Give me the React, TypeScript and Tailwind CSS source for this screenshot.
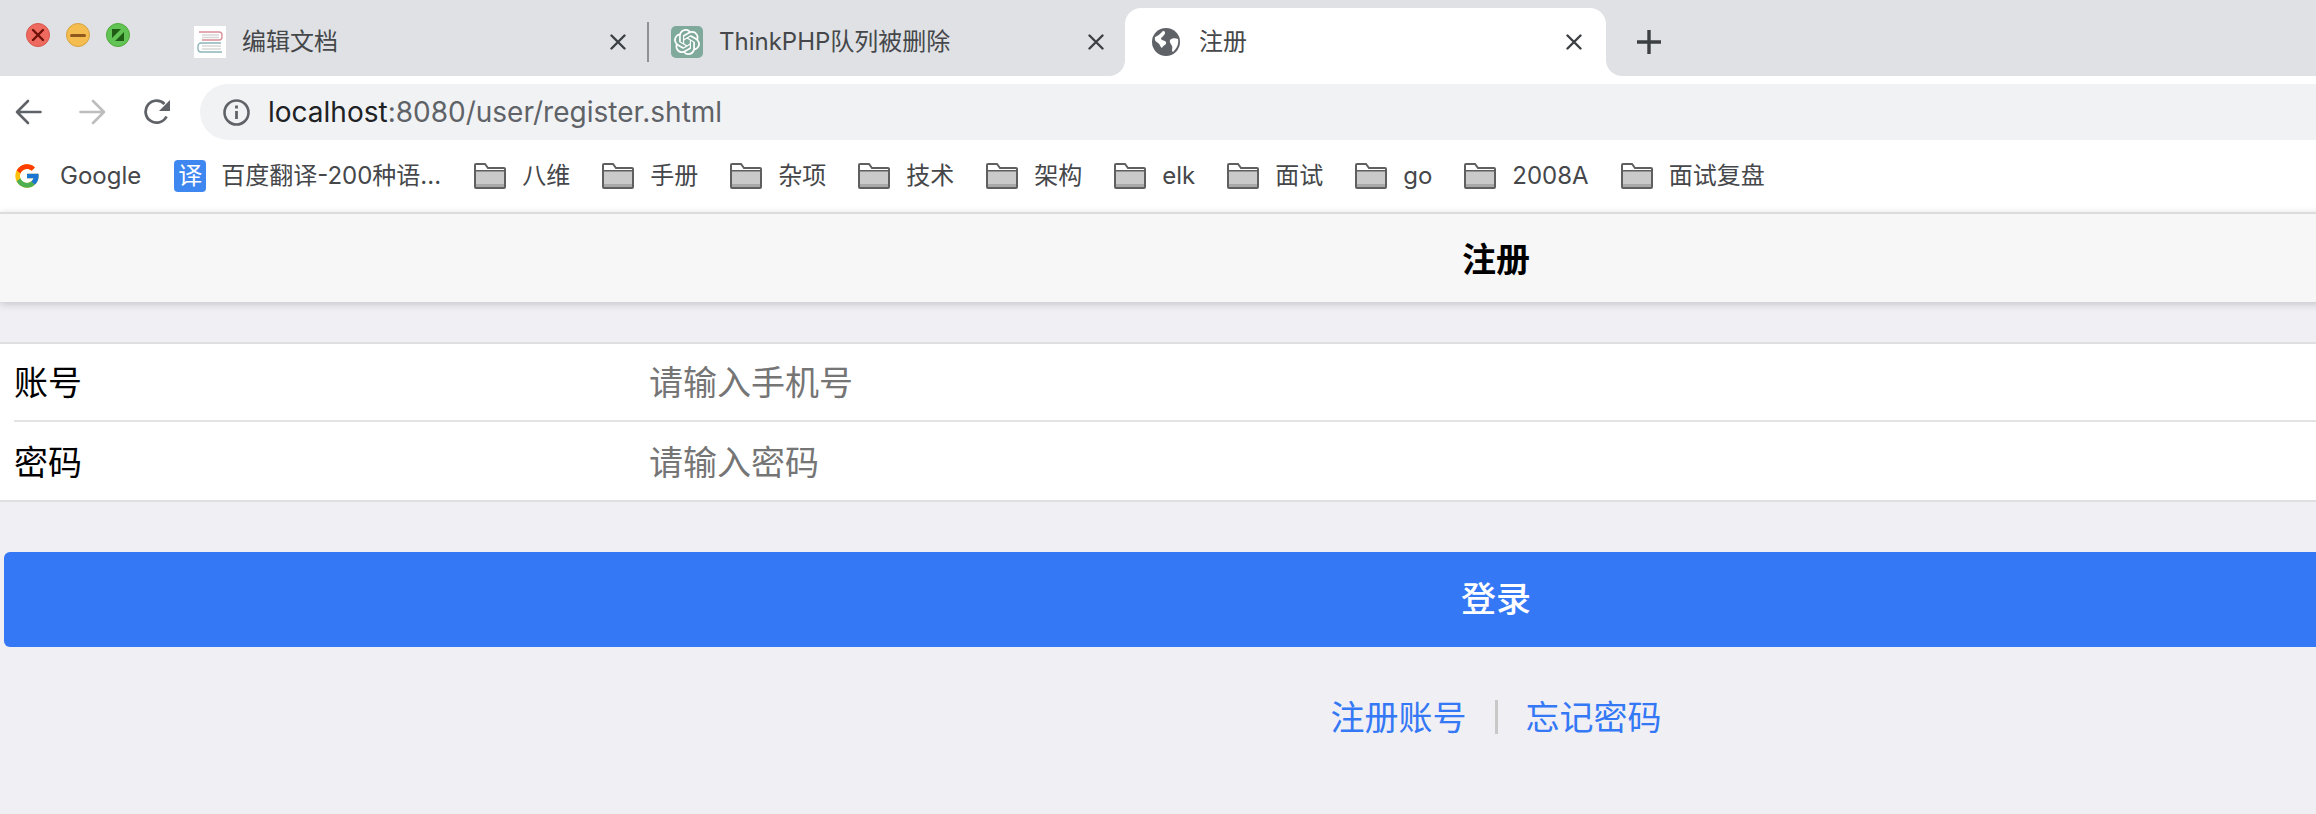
import { FcGoogle } from "react-icons/fc";
import { SiOpenai } from "react-icons/si";

function CloseIcon() {
  return (
    <svg width="16" height="16" viewBox="0 0 16 16" fill="none" stroke="#3c4043" strokeWidth="2.4" strokeLinecap="round">
      <path d="M1.5 1.5 14.5 14.5M14.5 1.5 1.5 14.5" />
    </svg>
  );
}

function FolderIcon() {
  return (
    <svg width="32" height="26" viewBox="0 0 32 26" className="shrink-0">
      <path d="M1 24V2a1 1 0 0 1 1-1h9l3 4h16a1 1 0 0 1 1 1v18a1 1 0 0 1-1 1H2a1 1 0 0 1-1-1Z" fill="#fff" stroke="#5f5f5f" strokeWidth="2" />
      <rect x="2" y="8" width="28" height="16" fill="#cacaca" />
      <rect x="2" y="7" width="28" height="1.5" fill="#5f5f5f" />
      <rect x="2" y="21" width="28" height="3" fill="#a9a9a9" />
    </svg>
  );
}

function BookFavicon() {
  return (
    <div className="w-8 h-8 bg-white flex items-center justify-center shrink-0">
      <svg width="26" height="24" viewBox="0 0 26 24" fill="none" strokeWidth="1.4">
        <path d="M2 2h20a3 3 0 0 1 3 3v2a3 3 0 0 1-3 3H5" stroke="#d9909a" />
        <path d="M5 5h17M5 7.5h17" stroke="#d8d8d8" />
        <path d="M24 13H4a3 3 0 0 0-3 3v3a3 3 0 0 0 3 3h21" stroke="#8db4bb" />
        <path d="M5 16h19M5 19h19" stroke="#d8d8d8" />
      </svg>
    </div>
  );
}

function GlobeIcon() {
  return (
    <svg width="28" height="28" viewBox="0 0 28 28" className="shrink-0">
      <circle cx="14" cy="14" r="14" fill="#5f6368" />
      <path d="M3 9c3-1 5-3 8-6 2 0 3 2 1 4-1 2-3 2-3 4 1 2 4 1 5 3 1 3-3 3-4 6-2-1-2-4-4-5-1-1-4-2-3-6Z" fill="#fff" />
      <path d="M18 12c2-2 5-2 8-1 1 5-1 9-5 13-2-1 0-4-1-6-1-2-3-4-2-6Z" fill="#fff" />
    </svg>
  );
}

const bookmarks = ["八维", "手册", "杂项", "技术", "架构", "elk", "面试", "go", "2008A", "面试复盘"];

export default function App() {
  return (
    <div className="w-[2316px] h-[814px] overflow-hidden bg-[#efeff4] font-['Inter','Noto_Sans_CJK_SC',sans-serif]">
      {/* tab strip */}
      <div className="h-[76px] bg-[#dfe1e5] flex items-end text-[24px] text-[#45474a]">
        <div className="w-[194px] h-full flex items-start gap-4 pl-[26px] pt-[23px] shrink-0">
          <span className="w-6 h-6 rounded-full bg-[#ee6a5f] border border-[#d5564b] flex items-center justify-center">
            <svg width="14" height="14" viewBox="0 0 14 14" stroke="#6e1109" strokeWidth="2.4" strokeLinecap="round">
              <path d="M2 2 12 12M12 2 2 12" />
            </svg>
          </span>
          <span className="w-6 h-6 rounded-full bg-[#f5bd4f] border border-[#d6a243] flex items-center justify-center">
            <span className="w-4 h-[3px] rounded-full bg-[#8f591d]" />
          </span>
          <span className="w-6 h-6 rounded-full bg-[#61c454] border border-[#51a839] flex items-center justify-center">
            <svg width="14" height="14" viewBox="0 0 14 14" fill="#1f5c14">
              <path d="M1 1h9L1 10ZM13 13H4l9-9Z" />
            </svg>
          </span>
        </div>
        <div className="w-[455px] h-full flex items-center pt-2 shrink-0">
          <BookFavicon />
          <span className="ml-4">编辑文档</span>
          <span className="ml-auto mr-[21px] flex"><CloseIcon /></span>
          <span className="w-[2px] h-10 bg-[#8f9194]" />
        </div>
        <div className="w-[476px] h-full flex items-center pl-[22px] pt-2 shrink-0">
          <span className="w-8 h-8 rounded-[5px] bg-[#7fa99b] flex items-center justify-center shrink-0">
            <SiOpenai className="text-white text-[26px]" />
          </span>
          <span className="ml-4">ThinkPHP队列被删除</span>
          <span className="ml-auto mr-[21px] flex"><CloseIcon /></span>
        </div>
        <div className="relative w-[481px] h-[68px] bg-white rounded-t-[16px] flex items-center pl-[27px] shrink-0">
          <span className="absolute -left-4 bottom-0 w-4 h-4 bg-white">
            <span className="block w-4 h-4 bg-[#dfe1e5] rounded-br-[16px]" />
          </span>
          <span className="absolute -right-4 bottom-0 w-4 h-4 bg-white">
            <span className="block w-4 h-4 bg-[#dfe1e5] rounded-bl-[16px]" />
          </span>
          <GlobeIcon />
          <span className="ml-[19px]">注册</span>
          <span className="ml-auto mr-6 flex"><CloseIcon /></span>
        </div>
        <div className="h-full flex items-center pl-[31px] pt-2">
          <svg width="24" height="24" viewBox="0 0 24 24" stroke="#3c4043" strokeWidth="3.4">
            <path d="M12 0v24M0 12h24" />
          </svg>
        </div>
      </div>

      {/* toolbar */}
      <div className="h-[68px] bg-white flex items-start pt-2">
        <div className="w-[200px] h-14 flex items-center pl-[15px] shrink-0">
          <svg width="27" height="26" viewBox="0 0 27 26" fill="none" stroke="#5f6368" strokeWidth="2.6" strokeLinecap="round" strokeLinejoin="round">
            <path d="M25.5 13H2M13 2 2 13l11 11" />
          </svg>
          <svg width="27" height="26" viewBox="0 0 27 26" fill="none" stroke="#bdbdbd" strokeWidth="2.6" strokeLinecap="round" strokeLinejoin="round" className="ml-[37px]">
            <path d="M1.5 13H25M14 2l11 11-11 11" />
          </svg>
          <svg width="28" height="26" viewBox="0 0 28 26" fill="none" className="ml-[37px]">
            <path d="M23.5 17.5A11 11 0 1 1 21.5 5" stroke="#5f6368" strokeWidth="2.8" />
            <path d="M27 1v11H16Z" fill="#5f6368" />
          </svg>
        </div>
        <div className="flex-1 h-14 bg-[#f1f2f4] rounded-l-[28px] flex items-center pl-[23px] text-[28px] text-[#5f6368]">
          <svg width="27" height="27" viewBox="0 0 27 27" fill="none">
            <circle cx="13.5" cy="13.5" r="12" stroke="#5f6368" strokeWidth="2.6" />
            <path d="M13.5 12v8" stroke="#5f6368" strokeWidth="2.8" />
            <path d="M13.5 6.5v3" stroke="#5f6368" strokeWidth="2.8" />
          </svg>
          <span className="ml-[18px]">
            <span className="text-[#202124]">localhost</span>:8080/user/register.shtml
          </span>
        </div>
      </div>

      {/* bookmarks */}
      <div className="h-[68px] bg-white flex items-center pb-1 pl-[13px] text-[24px] text-[#45474a]">
        <FcGoogle className="text-[28px] shrink-0" />
        <span className="ml-[19px]">Google</span>
        <span className="ml-[33px] w-8 h-8 rounded-[4px] bg-[#3f87f0] flex items-center justify-center text-white text-[24px] shrink-0">译</span>
        <span className="ml-[15px] w-[218px] whitespace-nowrap">百度翻译-200种语...</span>
        <div className="flex items-center gap-8 ml-[35px]">
          {bookmarks.map((name) => (
            <div key={name} className="flex items-center gap-4">
              <FolderIcon />
              <span>{name}</span>
            </div>
          ))}
        </div>
      </div>

      {/* page, wider than the window */}
      <div className="w-[2992px] text-black">
        <div className="relative h-[90px] bg-[#f7f7f8] border-t-2 border-[#dcdcdc] shadow-[0_2px_8px_rgba(0,0,0,0.18)] flex items-center justify-center text-[34px] font-bold pt-[2px]">
          注册
        </div>
        <div className="mt-10 bg-white border-y-2 border-[#dfdfe1] text-[34px]">
          <div className="h-[76px] flex items-center pl-[14px]">
            <label className="w-[635px] shrink-0">账号</label>
            <input className="flex-1 outline-none placeholder:text-[#757575]" placeholder="请输入手机号" />
          </div>
          <div className="ml-[14px] h-[2px] bg-[#e3e3e5]" />
          <div className="h-[78px] flex items-center pl-[14px] pt-[2px]">
            <label className="w-[635px] shrink-0">密码</label>
            <input className="flex-1 outline-none placeholder:text-[#757575]" placeholder="请输入密码" />
          </div>
        </div>
        <div className="mt-[50px] mx-1 h-[95px] rounded-md bg-[#3478f6] text-white text-[35px] font-medium flex items-center justify-center">
          登录
        </div>
        <div className="mt-[52px] h-[36px] flex items-center justify-center text-[34px] text-[#3478f6]">
          <span>注册账号</span>
          <span className="w-[3px] h-[34px] bg-[#c8c8c8] mx-[28px]" />
          <span>忘记密码</span>
        </div>
      </div>
    </div>
  );
}
